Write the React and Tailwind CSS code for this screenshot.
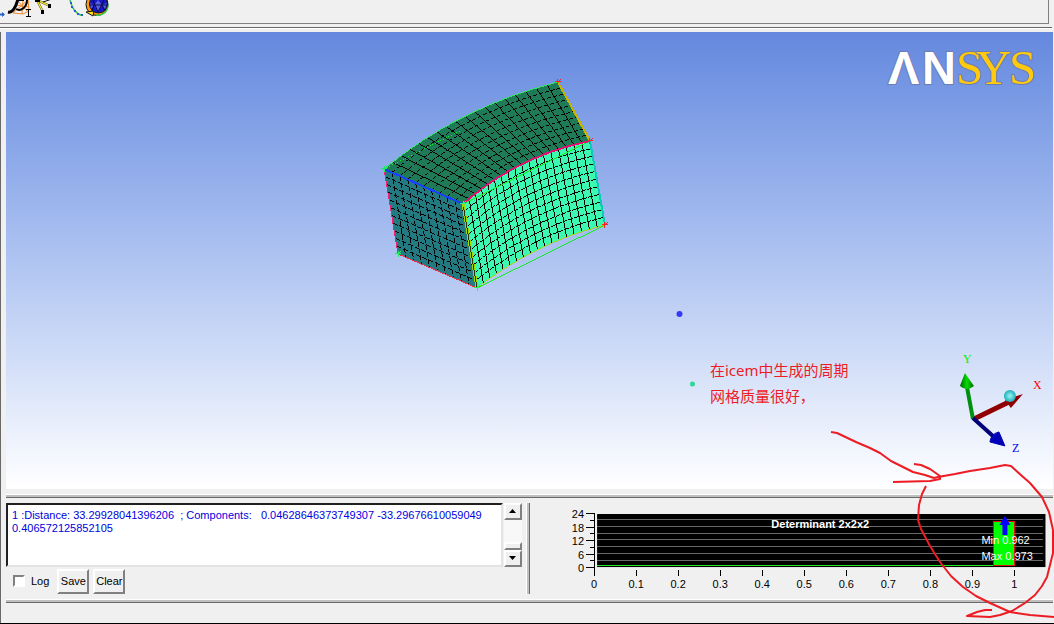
const UI_FONT = "font-['Liberation_Sans',Arial,sans-serif]"

// Block corners and the control points of the curved edges
const A = [384, 169]
const B = [558, 82]
const C = [590, 141]
const D = [463, 204]
const E = [477, 288]
const F = [605, 225]
const G = [398, 254]
const AB = [459, 107]
const DC = [517, 156]
const EF = [534, 243]

const lerp = (p, q, t) => [p[0] + (q[0] - p[0]) * t, p[1] + (q[1] - p[1]) * t]
const quad = (p, c, q, t) => lerp(lerp(p, c, t), lerp(c, q, t), t)
const seg = (p, q) => `M${p[0]} ${p[1]}L${q[0]} ${q[1]}`
const arc = (p, c, q) => `M${p[0]} ${p[1]}Q${c[0]} ${c[1]} ${q[0]} ${q[1]}`

// Lines between two facing curved edges: "across" joins them, "along" follows them
function curvedGrid(e1, e2, cols, rows) {
  let across = ''
  let along = ''
  for (let i = 1; i < cols; i++) across += seg(quad(...e1, i / cols), quad(...e2, i / cols))
  for (let j = 1; j < rows; j++) {
    const t = j / rows
    along += arc(lerp(e1[0], e2[0], t), lerp(e1[1], e2[1], t), lerp(e1[2], e2[2], t))
  }
  return { across, along }
}

const topGrid = curvedGrid([A, AB, B], [D, DC, C], 18, 10)
const frontGrid = curvedGrid([D, DC, C], [E, EF, F], 18, 11)
const leftGrid = curvedGrid([A, lerp(A, D, 0.5), D], [G, lerp(G, E, 0.5), E], 10, 11)

const CORNERS = [
  { p: A, color: '#20e860' },
  { p: B, color: '#ff2020' },
  { p: C, color: '#ff2020' },
  { p: D, color: '#30f090' },
  { p: E, color: '#30f050' },
  { p: F, color: '#ff2020' },
  { p: G, color: '#20e860' },
]

const Y_TICKS = [
  { label: '24', y: 11 },
  { label: '18', y: 25 },
  { label: '12', y: 38 },
  { label: '6', y: 52 },
  { label: '0', y: 65 },
]
const X_TICKS = ['0', '0.1', '0.2', '0.3', '0.4', '0.5', '0.6', '0.7', '0.8', '0.9', '1']
const GRID_ROWS = [17, 24, 31, 37, 44, 51, 58]

function Toolbar() {
  return (
    <header className="mr-[5px] h-6 border-r border-b border-[#808080]">
      <svg width="112" height="20" viewBox="0 0 112 20" fill="none">
        <path d="M0 14.500h4" stroke="#2864c8" strokeWidth="2" />
        <path d="M2 12l3 2.500-3 2.500z" fill="#2864c8" />
        {/* script p over an orange mesh */}
        <path d="M18 1l10-3 1 13-6 3-10-1 5-12 9 10M13 13l15-13M23 0l-1 14M15 5l14 2" stroke="#f08a30" />
        <path d="M8 12c4 1 7-2 10-13" stroke="#000" strokeWidth="3" />
        <path d="M16 9c5 3 11-2 11-9M19 0h5" stroke="#000" strokeWidth="2" />
        <path d="M26 9.500h5M28.500 9.500v7M26 16.500h5" stroke="#000" />
        {/* yellow rays with dark end points */}
        <path d="M37 0l13 6M37 0l6 12" stroke="#222" strokeWidth="2" />
        <path d="M37 0l13 6M37 0l6 12" stroke="#f0e020" strokeWidth="1.500" />
        <path d="M43 2l9-3" stroke="#111" />
        <path d="M48 4h3v4h-3zM41 10h3v4h-3zM35 0h5v2h-5z" fill="#000" />
        {/* curve with nodes */}
        <path d="M70 0c2 8 5 14 12 15.500" stroke="#30c050" strokeWidth="1.500" />
        <path d="M70 2h2v2h-2zM71 6h2v2h-2zM74 10h2v2h-2zM77 13h2v2h-2zM81 14h2v2h-2z" fill="#2060d0" />
        {/* blue sphere in a coloured ring */}
        <circle cx="97" cy="4.500" r="11" fill="#ff9a18" stroke="#111" />
        <path d="M96 15c8 1 12-4 12-11" stroke="#38c848" strokeWidth="1.500" />
        <path d="M86 12l8-1-1 5z" fill="#ffe018" stroke="#111" />
        <circle cx="98.500" cy="4" r="9" fill="#1818c8" stroke="#111" />
        <path d="M98 0l4 5-4 7-4-7zM90 3l4 2-3 4zM107 3l-5 2 3 4z" fill="#5860e0" />
        <path d="M92-2l6 14 7-14M90 5h17M94 5l-2 6M102 5l3 6" stroke="#060850" />
      </svg>
    </header>
  )
}

function Divider() {
  return <div className="h-1 border-t border-b border-t-white border-b-[#696969] bg-[#c0c0c0]" />
}

function Logo() {
  return (
    <g strokeLinejoin="round" paintOrder="stroke" stroke="#6c7cb4" strokeWidth="2">
      <text
        x="888 922"
        y="84"
        fill="#fff"
        fontFamily="Liberation Sans, Arial, sans-serif"
        fontWeight="700"
        fontSize="47"
      >
        ΛN
      </text>
      <text
        x="956 976 1009"
        y="84"
        fill="#ffc90e"
        fontFamily="Liberation Serif, Times New Roman, serif"
        fontSize="49"
      >
        SYS
      </text>
    </g>
  )
}

function Mesh() {
  return (
    <g fill="none" shapeRendering="crispEdges">
      <path d={`${arc(A, AB, B)}L${C}Q${DC} ${D}Z`} fill="#1f7a58" />
      <path d={`${arc(D, DC, C)}L${F}Q${EF} ${E}Z`} fill="#3cf8b0" />
      <path d={`M${A}L${D}L${E}L${G}Z`} fill="#237a80" />

      <g stroke="#000">
        <path d={topGrid.across} />
        <path d={topGrid.along} strokeDasharray="4 2" />
        <path d={frontGrid.across} />
        <path d={frontGrid.along} strokeDasharray="5 1" />
        <path d={leftGrid.across} strokeDasharray="5 2" />
        <path d={leftGrid.along} strokeDasharray="5 2" />
      </g>

      {/* Block edges */}
      <path d={arc(A, AB, B)} stroke="#30e860" />
      <path d={seg(B, C)} stroke="#c8b400" strokeWidth="2" />
      <path d={seg(C, F)} stroke="#10c8b8" strokeWidth="2" />
      <path d={arc(E, EF, F)} stroke="#a0d820" />
      <path d={seg(D, C)} stroke="#10f020" />
      <path d={arc(D, DC, C)} stroke="#e01070" strokeWidth="2" />
      <path d={seg(A, D)} stroke="#1840ff" strokeWidth="2" />
      <path d={seg(A, G)} stroke="#f02070" />
      <path d={seg(G, E)} stroke="#ff2840" />
      <path d={seg(D, E)} stroke="#a0d800" strokeWidth="3" />
      <path d={seg(D, E)} stroke="#303000" />
      <path d={seg(E, F)} stroke="#10f020" />
      <path d="M384 169L460 131" stroke="#10f020" strokeDasharray="1 2" />

      {CORNERS.map(({ p, color }) => (
        <path
          key={p.join()}
          d={`M${p[0] - 3} ${p[1]}h6M${p[0]} ${p[1] - 3}v6M${p[0] + 3} ${p[1] - 3}l-3 3`}
          stroke={color}
        />
      ))}
    </g>
  )
}

function Triad() {
  return (
    <g>
      <defs>
        <linearGradient id="greenCone">
          <stop offset="0" stopColor="#006000" />
          <stop offset="0.5" stopColor="#00e000" />
          <stop offset="1" stopColor="#006000" />
        </linearGradient>
        <radialGradient id="ball">
          <stop offset="0" stopColor="#a0f4f4" />
          <stop offset="1" stopColor="#18b0b8" />
        </radialGradient>
      </defs>
      <path d="M974 419L1011 401" stroke="#900000" strokeWidth="5" />
      <path d="M1023 394L1005 400L1011 408Z" fill="#900000" />
      <circle cx="1010" cy="396" r="6" fill="url(#ball)" />
      <path d="M973 419L967 387" stroke="#009010" strokeWidth="4" />
      <path d="M965 373L960 386Q967 392 974 386Z" fill="url(#greenCone)" />
      <path d="M973 418L993 436" stroke="#000078" strokeWidth="4" />
      <path d="M1005 446L990 442Q991 434 999 432Z" fill="#0000b8" stroke="#0000b8" />
      <g fontFamily="Liberation Serif, Times New Roman, serif" fontSize="12">
        <text x="963" y="363" fill="#00f000">Y</text>
        <text x="1033" y="389" fill="#ff0000">X</text>
        <text x="1012" y="452" fill="#0000f0">Z</text>
      </g>
    </g>
  )
}

function Viewport() {
  return (
    <main className="min-h-0 flex-1 bg-linear-to-b from-[#6488de] to-white">
      <svg className="h-full w-full" viewBox="6 32 1047 457">
        <Logo />
        <Mesh />
        <circle cx="679.500" cy="314" r="3" fill="#3838f8" />
        <circle cx="692.500" cy="384" r="2.500" fill="#30d898" />
        <g fill="#ed1c24" fontSize="15" fontFamily="Noto Sans, Noto Sans CJK SC, sans-serif">
          <text x="710" y="376">在icem中生成的周期</text>
          <text x="710" y="402">网格质量很好，</text>
        </g>
        <Triad />
      </svg>
    </main>
  )
}

const RAISED = 'border-2 border-t-white border-l-white border-r-[#808080] border-b-[#808080] bg-[#f0f0f0]'

function MessagePanel() {
  return (
    <section className="flex w-1/2 gap-1">
      <div className="flex min-w-0 flex-1 flex-col">
        <div className="flex gap-px">
          <textarea
            readOnly
            aria-label="Messages"
            className="h-16 min-w-0 flex-1 resize-none overflow-hidden border-2 border-t-[#202020] border-r-[#e3e3e3] border-b-[#e3e3e3] border-l-[#202020] bg-white px-1 py-1 text-[11px] leading-[13px] text-[#0000e0] outline-none"
            defaultValue="1 :Distance: 33.29928041396206  ; Components:   0.04628646373749307 -33.29676610059049 0.406572125852105"
          />
          <div className="flex w-[18px] flex-col bg-[#f8f8f8]">
            <button type="button" aria-label="Scroll up" className={`flex h-[17px] items-center justify-center ${RAISED}`}>
              <svg width="7" height="4" viewBox="0 0 7 4"><path d="M3.500 0L7 4H0Z" /></svg>
            </button>
            <div className="flex-1" />
            <div className={`h-2 ${RAISED}`} />
            <button type="button" aria-label="Scroll down" className={`flex h-[17px] items-center justify-center ${RAISED}`}>
              <svg width="7" height="4" viewBox="0 0 7 4"><path d="M0 0H7L3.500 4Z" /></svg>
            </button>
          </div>
        </div>
        <div className="flex items-center gap-1 pt-0.5 pl-[7px] text-[11px] leading-4">
          <label className="flex items-center gap-1.5 pr-1">
            <input
              type="checkbox"
              className="size-3 appearance-none border-2 border-t-[#808080] border-r-white border-b-white border-l-[#808080] bg-white"
            />
            Log
          </label>
          <button type="button" className={`h-[25px] w-8 ${RAISED}`}>Save</button>
          <button type="button" className={`h-[25px] w-8 ${RAISED}`}>Clear</button>
        </div>
      </div>
      <div className="w-1 border-r border-l border-r-[#696969] border-l-white bg-[#c0c0c0]" />
    </section>
  )
}

function Histogram() {
  return (
    <section className="min-w-0 flex-1">
      <svg className="w-full" viewBox="0 0 523 91" fontSize="11">
        <g stroke="#000" shapeRendering="crispEdges">
          <path d="M64.500 11V73" />
          {Y_TICKS.map(t => <path key={t.label} d={`M56 ${t.y - 0.5}h9`} />)}
          {[18, 31, 45, 58].map(y => <path key={y} d={`M60 ${y - 0.5}h5`} />)}
          {X_TICKS.map((label, i) => <path key={label} d={`M${64.5 + i * 42} 67v6`} />)}
        </g>
        {Y_TICKS.map(t => <text key={t.label} x="54" y={t.y + 4} textAnchor="end">{t.label}</text>)}
        {X_TICKS.map((label, i) => <text key={label} x={64 + i * 42} y="85" textAnchor="middle">{label}</text>)}

        <rect x="67" y="11" width="448" height="53" />
        <g shapeRendering="crispEdges">
          {GRID_ROWS.map(y => <path key={y} d={`M67 ${y - 0.5}H513`} stroke="#686868" />)}
          <path d="M67 62.500H463" stroke="#20e820" />
          <rect x="463.500" y="18.500" width="21" height="44" fill="#00ff00" stroke="#e01010" />
        </g>
        <path d="M474.500 13L480 22H477V32H472V22H469Z" fill="#0000ff" />
        <g fill="#fff">
          <text x="290" y="25" textAnchor="middle" fontWeight="700">Determinant 2x2x2</text>
          <text x="451" y="41">Min 0.962</text>
          <text x="451" y="57">Max 0.973</text>
        </g>
      </svg>
    </section>
  )
}

// Hand-drawn arrow and loop pointing at the histogram peak
function RedMarks() {
  return (
    <svg
      className="pointer-events-none absolute right-0 -bottom-px h-[196px] w-56"
      viewBox="830 428 224 196"
      fill="none"
      stroke="#ed1c24"
      strokeWidth="2"
      strokeLinejoin="round"
    >
      <path d="M831 432L837 433L856 442L870 448L880 453L891 461L903 467L913 472L925 475L934 478L938 477L955 474L970 471L990 468L1005 465L1011 466L1022 476L1030 483L1042 497L1049 512L1053 530L1053 553L1047 577L1042 586L1035 595L1025 603L1012 611L1000 615L990 617L967 616L977 612L985 610L992 610" />
      <path d="M914 464L921 465L930 469L940 476L940 479L930 481L893 482" />
      <path d="M926 486L922 494L919 505L918 520L921 529L930 546L940 562L951 576L963 587L976 596L990 603L1010 612L1030 615L1054 617" />
    </svg>
  )
}

export default function App() {
  return (
    <div className={`relative flex h-screen flex-col border-b border-black bg-[#f0f0f0] text-black ${UI_FONT}`}>
      <Toolbar />
      <div className="mt-[3px] mr-0.5 h-0.5 border-t border-b border-t-[#696969] border-b-white" />
      <div className="mt-[3px] mr-px flex min-h-0 flex-1 flex-col border-l border-[#696969] pl-[5px]">
        <Viewport />
        <div className="flex flex-col gap-[5px] pt-[5px]">
          <Divider />
          <div className="flex">
            <MessagePanel />
            <Histogram />
          </div>
          <Divider />
        </div>
        <footer className="h-5" />
      </div>
      <RedMarks />
    </div>
  )
}
